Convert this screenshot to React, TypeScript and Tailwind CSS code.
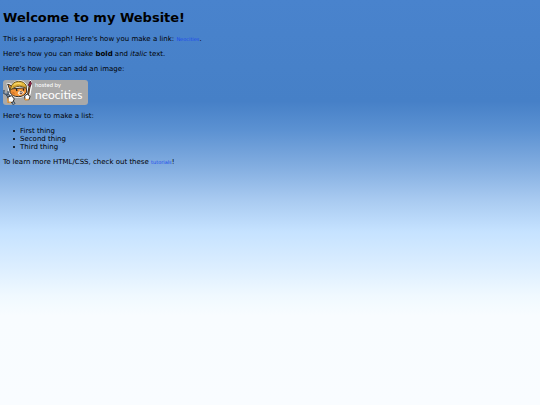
import type { ReactNode } from "react";

function SiteLink({ href, children }: { href: string; children: ReactNode }) {
  return (
    <a href={href} className="text-[5px] leading-none text-[#1c49ea]">
      {children}
    </a>
  );
}

function CatMascot() {
  return (
    <svg viewBox="0 0 87 75" className="h-[25px] w-[29px] shrink-0" aria-hidden="true">
      {/* white sticker outline */}
      <g fill="#fff" stroke="#fff" strokeWidth="3" strokeLinejoin="round">
        <path d="M12 10 L27 13 Q34 2 50 2 Q67 3 72 19 L73 36 Q66 52 46 52 Q25 52 19 39 Z" />
        <path d="M76 17 L82 1 L87 10 L81 44 L72 42 Z" />
      </g>
      {/* wrench */}
      <path d="M11 41 L34 73" stroke="#34404f" strokeWidth="9" />
      <path d="M12 42 L33 72" stroke="#8ba3bb" strokeWidth="4" />
      <path d="M3 30 L3 40 L12 44 L16 34" fill="none" stroke="#3d4c5f" strokeWidth="5" />
      <path d="M3 31 L4 39 L12 42 L15 35" fill="none" stroke="#8ba3bb" strokeWidth="2" />
      {/* brush */}
      <path d="M80 18 L74 50" stroke="#33261f" strokeWidth="6" />
      <path d="M80 20 L75 48" stroke="#a86b2c" strokeWidth="2" />
      <path d="M82 3 L76 16 L82 19 L85 10 Z" fill="#b01f48" stroke="#4b1a2b" strokeWidth="3" />
      {/* head and ears */}
      <path d="M14 12 L27 18 L22 34 Z" fill="#f08a2c" stroke="#343027" strokeWidth="3" />
      <path d="M21 27 L70 23 L71 36 Q63 50 47 50 Q27 50 21 37 Z" fill="#f39436" stroke="#302d29" strokeWidth="3" />
      <path d="M46 36 L51 31 L57 34 L64 36 Q60 45 52 46 Q46 45 44 40 Z" fill="#ffefd8" />
      {/* helmet */}
      <path d="M23 24 Q27 5 47 4 Q65 4 70 18 L70 25 L59 20 Q42 15 22 30 Z" fill="#e5b93c" stroke="#6b5729" strokeWidth="3" />
      <path d="M33 13 Q44 8 56 12" fill="none" stroke="#fbdc78" strokeWidth="3" />
      <path d="M30 20 Q46 11 67 20" fill="none" stroke="#b98a2a" strokeWidth="2" />
      <path d="M40 27 L42 33 M61 26 L62 32" stroke="#242321" strokeWidth="4" />
      <path d="M49 35 L56 33 L55 38 Z" fill="#29201e" />
      <path d="M50 40 Q54 45 59 38" fill="none" stroke="#58251f" strokeWidth="3" />
      <path d="M25 36 L34 38 M27 42 L36 41" stroke="#c9651f" strokeWidth="2" />
      {/* paws */}
      <path d="M15 51 L26 47 L34 57 L29 67 L15 67 Z" fill="#fff" stroke="#302b27" strokeWidth="3" />
      <path d="M15 55 L14 66 L24 68" fill="none" stroke="#efa142" strokeWidth="4" />
      <path d="M65 47 L74 42 L81 50 L78 59 L66 59 Z" fill="#fff" stroke="#302b27" strokeWidth="3" />
      <path d="M66 55 L68 59 L77 58" fill="none" stroke="#efa142" strokeWidth="4" />
    </svg>
  );
}

function NeocitiesBadge() {
  return (
    <a
      href="https://neocities.org"
      aria-label="Hosted by Neocities"
      className="flex h-[25px] w-[85px] overflow-hidden rounded-[3px] bg-[#a9a9a9] font-[Lato,sans-serif] text-white"
    >
      <CatMascot />
      <span className="flex flex-col pt-px pl-[3px]">
        <span className="text-[6px] leading-[8px]">hosted by</span>
        <span className="text-[12px] leading-[12px]">neocities</span>
      </span>
    </a>
  );
}

export default function App() {
  const things = ["First thing", "Second thing", "Third thing"];

  return (
    <main className="min-h-screen bg-[linear-gradient(to_bottom,#4983cd_0%,#4680c7_25%,#5b91d2_32%,#82ade0_41%,#a7c9f0_49%,#c5e2ff_57%,#dceeff_66%,#f0f9ff_73%,#f8fcff_78%,#f9fcff_100%)] px-[3px] pt-[9px] font-['DejaVu_Sans',sans-serif] text-[7px] leading-[8px] text-black">
      <h1 className="mb-[9px] text-[13px] leading-[17px] font-bold">
        Welcome to my Website!
      </h1>
      <div className="flex flex-col gap-[7px]">
        <p>
          This is a paragraph! Here's how you make a link:{" "}
          <SiteLink href="https://neocities.org">Neocities</SiteLink>.
        </p>
        <p>
          Here's how you can make <strong>bold</strong> and <em>italic</em> text.
        </p>
        <p>Here's how you can add an image:</p>
        <NeocitiesBadge />
        <p>Here's how to make a list:</p>
        <ul className="pl-[10px]">
          {things.map((thing) => (
            <li
              key={thing}
              className="flex items-center gap-[5px] before:size-[2px] before:rounded-full before:bg-black"
            >
              {thing}
            </li>
          ))}
        </ul>
        <p>
          To learn more HTML/CSS, check out these{" "}
          <SiteLink href="https://neocities.org/tutorials">tutorials</SiteLink>!
        </p>
      </div>
    </main>
  );
}
